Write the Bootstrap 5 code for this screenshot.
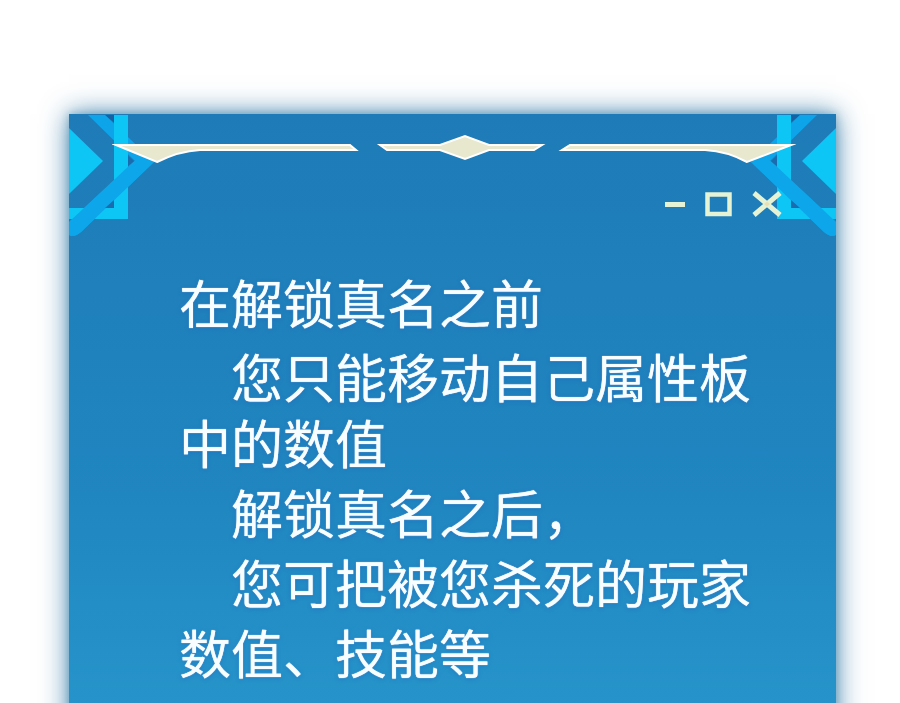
<!DOCTYPE html>
<html lang="zh-CN">
<head>
<meta charset="utf-8">
<meta name="viewport" content="width=device-width, initial-scale=1">
<title>真名</title>
<link href="https://cdn.jsdelivr.net/npm/bootstrap@5.3.0/dist/css/bootstrap.min.css" rel="stylesheet">
<style>
  body { background: #fff; font-family: "Noto Sans CJK SC", sans-serif; }
  .stage { padding: 114px 64px 0 69px; }
  /* runs past the bottom edge so the side glow keeps its strength */
  .panel {
    margin-bottom: -60px;
    padding-bottom: 60px;
    background: linear-gradient(#1e7bb7 0, #1f80bb 170px, #2086c0 380px, #2694ca 600px);
    box-shadow: 0 0 8px rgba(40, 120, 160, .4), 0 0 26px rgba(25, 105, 155, .8);
  }
  .corner { width: 86px; height: 124px; }
  .corner-end { transform: scaleX(-1); }
  .ornament { padding: 20px 40px 0 43px; }
  .controls { gap: 20px; padding: 27px 54px 0 0; }
  .controls button { color: #e6f2d4; line-height: 0; }
  .message { padding: 50px 48px 0 110px; font-size: 52px; line-height: 70px; color: #f8fdff; text-shadow: 0 0 1px #f8fdff, 0 1px 4px rgba(35, 85, 190, .4); }
  .message p { text-indent: 1em; }
  .message .opening { text-indent: 0; margin-bottom: 6px; }
  .message .rule { line-height: 66px; margin-bottom: 2px; }
</style>
<script src="https://cdn.jsdelivr.net/npm/bootstrap@5.3.0/dist/js/bootstrap.bundle.min.js"></script>
</head>
<body>
<main class="stage d-flex flex-column min-vh-100 overflow-hidden">
  <section class="panel position-relative flex-grow-1" aria-label="系统提示">
    <svg class="corner position-absolute top-0 start-0" viewBox="0 0 86 124" aria-hidden="true">
      <g id="corner-art">
        <path d="M36 1H52V14Z" fill="#1a5fa2"/>
        <path d="M0 14 34 47 0 80Z" fill="#0dc6f5"/>
        <path d="M19 1H36L85 48 12 118Q5 124 0 121V108L66 47Z" fill="#0ea4e9"/>
        <path d="M45 1H59V105H0V94H45Z" fill="#0dc6f5"/>
        <path d="M69 44 85 48 12 118Q5 124 0 121V108L62 50Z" fill="#0ea6ea"/>
        <path d="M59 42 65 47 59 52Z M36 94 45 86V94Z" fill="#1a6caf"/>
      </g>
    </svg>
    <svg class="corner corner-end position-absolute top-0 end-0" viewBox="0 0 86 124" aria-hidden="true"><use href="#corner-art"/></svg>

    <div class="ornament position-relative">
      <svg class="d-block w-100" viewBox="112 134 684 30" fill="#e7e8cd" stroke="#fff" stroke-width="2" stroke-miterlimit="8" aria-hidden="true">
        <path d="M116 145H350L356 150H200C182 151 169 156 157 162Z"/>
        <path d="M380 145H440L465 136 489 145H542L534 150H489L465 159 440 150H387Z"/>
        <path d="M570 145H791L747 162C736 156 722 151 705 150H562Z"/>
      </svg>
    </div>

    <div class="controls position-relative d-flex justify-content-end align-items-center">
      <button type="button" class="btn p-0 border-0" aria-label="最小化"><svg width="20" height="26" viewBox="0 0 20 26"><path d="M0 13.500H20" stroke="currentColor" stroke-width="5"/></svg></button>
      <button type="button" class="btn p-0 border-0" aria-label="最大化"><svg width="27" height="26" viewBox="0 0 27 26"><rect x="2.500" y="3.500" width="22" height="19.500" fill="none" stroke="currentColor" stroke-width="4.500"/></svg></button>
      <button type="button" class="btn p-0 border-0" aria-label="关闭"><svg width="30" height="26" viewBox="0 0 30 26"><path d="M2 2 28 24M28 2 2 24" fill="none" stroke="currentColor" stroke-width="5"/><path d="M12 13 15 10.500 18 13 15 15.500Z" fill="#e9dfb5"/></svg></button>
    </div>

    <div class="message">
      <p class="opening">在解锁真名之前</p>
      <p class="rule">您只能移动自己属性板中的数值</p>
      <p class="mb-0">解锁真名之后，</p>
      <p class="mb-0">您可把被您杀死的玩家数值、技能等</p>
    </div>
  </section>
</main>
</body>
</html>
